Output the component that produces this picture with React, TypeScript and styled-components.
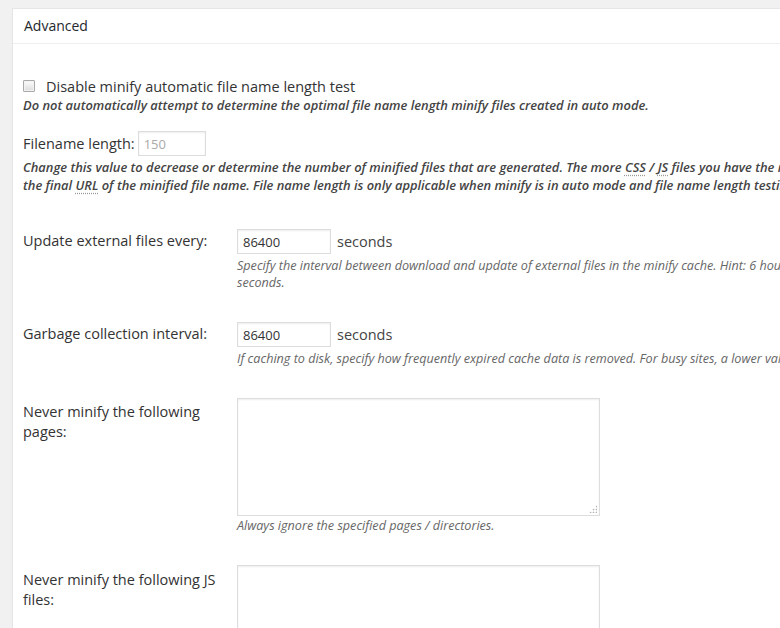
import styled, { createGlobalStyle } from "styled-components";

const GlobalStyle = createGlobalStyle`
  html, body {
    margin: 0;
    padding: 0;
    background: #f1f1f1;
    overflow: hidden;
    font-family: "Open Sans", "Liberation Sans", sans-serif;
    color: #444;
  }
`;

const Page = styled.div`
  padding: 8px 0 0 12px;
`;

const Panel = styled.section`
  width: 1240px;
  min-height: 640px;
  background: #fff;
  border: 1px solid #e5e5e5;
  box-shadow: 0 1px 1px rgba(0, 0, 0, 0.04);
`;

const PanelHeader = styled.h3`
  margin: 0;
  height: 34px;
  line-height: 34px;
  padding: 0 11px;
  font-size: 14px;
  font-weight: 400;
  color: #23282d;
  border-bottom: 1px solid #eee;
`;

const PanelBody = styled.div`
  padding: 0 10px;
`;

const Block = styled.div<{ $top: number }>`
  margin-top: ${(p) => p.$top}px;
`;

const CheckLabel = styled.label`
  display: flex;
  align-items: center;
  height: 20px;
  font-size: 14.5px;
  color: #333;
`;

const CheckBox = styled.span`
  display: inline-block;
  box-sizing: border-box;
  width: 12px;
  height: 12px;
  margin: 0 11px 0 0;
  border: 1px solid #a9a9a9;
  border-radius: 1px;
  background: linear-gradient(#fdfdfd, #dcdcdc);
  box-shadow: inset 0 0 0 1px #f2f2f2;
`;

// bold italic help text; each line is its own row, as the page is cropped on the right
const StrongNote = styled.div<{ $top?: number }>`
  margin-top: ${(p) => p.$top ?? 0}px;
  font-size: 12.9px;
  line-height: 18px;
  font-style: italic;
  font-weight: 600;
  color: #444;
  white-space: nowrap;
`;

const Abbr = styled.abbr`
  text-decoration: underline dotted #999;
  text-underline-offset: 3px;
`;

const InlineRow = styled.div<{ $gap?: number }>`
  display: flex;
  align-items: center;
  gap: ${(p) => p.$gap ?? 5}px;
  font-size: 14.5px;
  color: #333;
`;

const TextInput = styled.input<{ $w: number }>`
  box-sizing: border-box;
  width: ${(p) => p.$w}px;
  height: 25px;
  padding: 3px 5px;
  border: 1px solid #ddd;
  box-shadow: inset 0 1px 2px rgba(0, 0, 0, 0.07);
  font-family: inherit;
  font-size: 13px;
  color: #333;
  background: #fff;
  outline: none;

  &:disabled {
    color: #aaa;
    background: #fff;
  }
`;

const FormRow = styled.div<{ $top: number }>`
  display: grid;
  grid-template-columns: 200px 1fr;
  column-gap: 14px;
  margin-top: ${(p) => p.$top}px;
  align-items: start;
`;

const RowLabel = styled.div<{ $pad: number }>`
  padding-top: ${(p) => p.$pad}px;
  font-size: 14.5px;
  line-height: 20px;
  color: #333;
`;

const Unit = styled.span`
  font-size: 14.5px;
  color: #444;
  margin-left: 1px;
`;

const Note = styled.div<{ $top?: number }>`
  margin-top: ${(p) => p.$top ?? 3}px;
  font-size: 12.6px;
  line-height: 17px;
  font-style: italic;
  color: #666;
  white-space: nowrap;
`;

const AreaWrap = styled.div`
  position: relative;
  width: 363px;

  &::after {
    content: "";
    position: absolute;
    right: 3px;
    bottom: 3px;
    width: 8px;
    height: 8px;
    background-image: radial-gradient(circle, #b5b5b5 0.8px, transparent 1.1px);
    background-size: 3px 3px;
    clip-path: polygon(100% 0, 100% 100%, 0 100%);
  }
`;

const Area = styled.textarea`
  display: block;
  box-sizing: border-box;
  width: 363px;
  height: 118px;
  border: 1px solid #ddd;
  box-shadow: inset 0 1px 2px rgba(0, 0, 0, 0.07);
  resize: none;
  outline: none;
  font-family: inherit;
`;

const Control = styled.div``;

export default function App() {
  return (
    <>
      <GlobalStyle />
      <Page>
        <Panel>
          <PanelHeader>Advanced</PanelHeader>
          <PanelBody>
            <Block $top={32}>
              <CheckLabel>
                <CheckBox />
                Disable minify automatic file name length test
              </CheckLabel>
              <StrongNote>
                Do not automatically attempt to determine the optimal file name length minify files created in auto mode.
              </StrongNote>
            </Block>

            <Block $top={17}>
              <InlineRow $gap={3}>
                Filename length:
                <TextInput $w={68} disabled defaultValue="150" />
              </InlineRow>
              <StrongNote $top={2}>
                Change this value to decrease or determine the number of minified files that are generated. The more{" "}
                <Abbr>CSS</Abbr> / <Abbr>JS</Abbr> files you have the more files will be generated because their file
                names are combined in
              </StrongNote>
              <StrongNote>
                the final <Abbr>URL</Abbr> of the minified file name. File name length is only applicable when minify is
                in auto mode and file name length testing is enabled. The maximum supported value is 246.
              </StrongNote>
            </Block>

            <FormRow $top={35}>
              <RowLabel $pad={2}>Update external files every:</RowLabel>
              <Control>
                <InlineRow>
                  <TextInput $w={94} defaultValue="86400" />
                  <Unit>seconds</Unit>
                </InlineRow>
                <Note>
                  Specify the interval between download and update of external files in the minify cache. Hint: 6 hours is
                  21600 seconds. 12 hours is 43200 seconds. 24 hours is 86400
                </Note>
                <Note $top={0}>seconds.</Note>
              </Control>
            </FormRow>

            <FormRow $top={31}>
              <RowLabel $pad={2}>Garbage collection interval:</RowLabel>
              <Control>
                <InlineRow>
                  <TextInput $w={94} defaultValue="86400" />
                  <Unit>seconds</Unit>
                </InlineRow>
                <Note>
                  If caching to disk, specify how frequently expired cache data is removed. For busy sites, a lower value is
                  best.
                </Note>
              </Control>
            </FormRow>

            <FormRow $top={31}>
              <RowLabel $pad={4}>Never minify the following pages:</RowLabel>
              <Control>
                <AreaWrap>
                  <Area />
                </AreaWrap>
                <Note $top={1}>Always ignore the specified pages / directories.</Note>
              </Control>
            </FormRow>

            <FormRow $top={31}>
              <RowLabel $pad={5}>Never minify the following JS files:</RowLabel>
              <Control>
                <AreaWrap>
                  <Area />
                </AreaWrap>
              </Control>
            </FormRow>
          </PanelBody>
        </Panel>
      </Page>
    </>
  );
}
